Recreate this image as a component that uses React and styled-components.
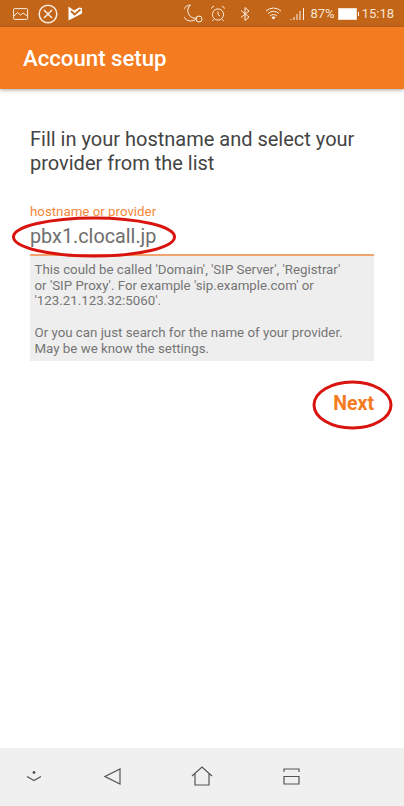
import React from 'react';
import styled, { createGlobalStyle } from 'styled-components';

const GlobalStyle = createGlobalStyle`
  html, body {
    margin: 0;
    padding: 0;
    background: #fff;
  }
  body {
    font-family: Roboto, "Liberation Sans", sans-serif;
  }
`;

export default function App() {
    return (
        <Screen>
            <GlobalStyle />
            <StatusBar>
                <StatusGroup>
                    <Glyph width="16" height="14" $left={13} viewBox="0 0 16 14">
                        <rect x="0.6" y="1.6" width="14" height="10.8" rx="1" />
                        <path d="M1 9l3.5-3.5 3 2.5 2.5-2 4.5 3" />
                    </Glyph>
                    <Glyph width="20" height="20" $left={9} viewBox="0 0 20 20" $thick>
                        <circle cx="10" cy="10" r="8.8" />
                        <path d="M6 6l8 8M14 6l-8 8" />
                    </Glyph>
                    <Glyph width="15" height="15" $left={10} viewBox="0 0 15 15">
                        <path className="fill" d="M0.5 0.5L6 4.5l5-3 3 .5v5.500L0.5 14.500z" />
                        <path className="cut" d="M3 5l3.500 3.500 6-5" />
                    </Glyph>
                </StatusGroup>
                <StatusGroup>
                    <Glyph width="19" height="19" $left={0} viewBox="0 0 19 19">
                        <path d="M6.5 1a8 8 0 1 0 6.5 13 7.5 7.5 0 0 1-6.5-13z" />
                        <circle cx="15" cy="15" r="3" />
                    </Glyph>
                    <Glyph width="16" height="17" $left={7} viewBox="0 0 16 17">
                        <circle cx="8" cy="9.5" r="5.6" />
                        <path d="M8 6.5v3l2 1.5M1 3.5l3-2.5M15 3.5l-3-2.5M3.5 14.5L2.5 16M12.5 14.5l1 1.5" />
                    </Glyph>
                    <Glyph width="11" height="16" $left={14} viewBox="0 0 11 16">
                        <path d="M1 4.5l8 6.5-4 3.5V1.5l4 3.5-8 6.5" />
                    </Glyph>
                    <Glyph width="17" height="16" $left={14} viewBox="0 0 17 16">
                        <path d="M1 5a11 11 0 0 1 15 0M3 7.5a8 8 0 0 1 11 0M5 10a5 5 0 0 1 7 0" />
                        <path className="fill" d="M6.5 11.5a3 3 0 0 1 4 0L8.5 13.5z" />
                    </Glyph>
                    <Glyph width="16" height="14" $left={8} viewBox="0 0 16 14">
                        <path d="M1 13v-1M4 13v-3M7 13V7M10 13V4M13.5 13V1" />
                    </Glyph>
                    <StatusText $left={4}>87%</StatusText>
                    <Battery />
                    <StatusText $left={5}>15:18</StatusText>
                </StatusGroup>
            </StatusBar>
            <AppBar>Account setup</AppBar>
            <Content>
                <Heading>Fill in your hostname and select your provider from the list</Heading>
                <FieldLabel>hostname or provider</FieldLabel>
                <FieldValue>pbx1.clocall.jp</FieldValue>
                <Hint>
                    <p>This could be called 'Domain', 'SIP Server', 'Registrar' or 'SIP Proxy'. For example 'sip.example.com' or '123.21.123.32:5060'.</p>
                    <p>Or you can just search for the name of your provider. May be we know the settings.</p>
                </Hint>
                <Actions>
                    <NextButton>Next</NextButton>
                </Actions>
            </Content>
            <NavBar>
                <NavIcon width="16" height="12" viewBox="0 0 16 12" $left={0}>
                    <circle className="fill" cx="8" cy="2.5" r="1.4" />
                    <path d="M1 6.5l7 4 7-4" />
                </NavIcon>
                <NavIcon width="17" height="17" viewBox="0 0 17 17" $left={62}>
                    <path d="M16 1v15L1 8.5z" />
                </NavIcon>
                <NavIcon width="22" height="20" viewBox="0 0 22 20" $left={70}>
                    <path d="M1 10l10-9 10 9M4 8v11h14V8" />
                </NavIcon>
                <NavIcon width="17" height="17" viewBox="0 0 17 17" $left={70}>
                    <path d="M1 4V1h15v3M1 8.5h15V16H1z" />
                </NavIcon>
            </NavBar>
            <Annotation width="404" height="806" viewBox="0 0 404 806">
                <ellipse cx="94" cy="237" rx="80.5" ry="19" />
                <ellipse cx="352.5" cy="405" rx="38.5" ry="23" />
            </Annotation>
        </Screen>
    );
}

const Screen = styled.div`
  position: relative;
  width: 404px;
  height: 806px;
  overflow: hidden;
  display: flex;
  flex-direction: column;
  background: #fff;
`;

const StatusBar = styled.div`
  height: 27px;
  flex: none;
  display: flex;
  align-items: center;
  justify-content: space-between;
  padding-right: 10px;
  background: #c26518;
  color: #fbeee2;
`;

const StatusGroup = styled.div`
  display: flex;
  align-items: center;
`;

const Glyph = styled.svg`
  flex: none;
  margin-left: ${({ $left }) => $left}px;
  fill: none;
  stroke: #fbeee2;
  stroke-width: ${({ $thick }) => ($thick ? 1.5 : 1)};
  .fill {
    fill: #fff;
    stroke: none;
  }
  .cut {
    stroke: #c26518;
    stroke-width: 1.8;
  }
`;

const StatusText = styled.span`
  margin-left: ${({ $left }) => $left}px;
  font-size: 13px;
  color: #f8e4d2;
`;

const Battery = styled.div`
  position: relative;
  box-sizing: border-box;
  width: 19px;
  height: 12px;
  margin-left: 3px;
  background: #fff;
  border: 1px solid #f3dcc8;
  &::after {
    content: '';
    position: absolute;
    right: -3px;
    top: 3px;
    width: 1px;
    height: 4px;
    background: #fff;
  }
`;

const AppBar = styled.div`
  height: 62px;
  flex: none;
  box-sizing: border-box;
  padding-left: 23px;
  display: flex;
  align-items: center;
  font-size: 22.2px;
  font-weight: 500;
  color: #fff;
  background: #f47b20;
  box-shadow: 0 1px 4px rgba(0, 0, 0, 0.35);
  z-index: 1;
`;

const Content = styled.div`
  flex: 1;
  box-sizing: border-box;
  padding: 39px 30px 0;
`;

const Heading = styled.h1`
  margin: 0;
  font-size: 20px;
  font-weight: 400;
  line-height: 23.5px;
  color: #444;
`;

const FieldLabel = styled.div`
  margin-top: 29px;
  font-size: 13.3px;
  line-height: 15px;
  color: #f4873a;
`;

const FieldValue = styled.div`
  height: 37px;
  box-sizing: border-box;
  padding-top: 5px;
  font-size: 19.8px;
  line-height: 25px;
  color: #6e6e6e;
  border-bottom: 2px solid #f2a46e;
`;

const Hint = styled.div`
  box-sizing: border-box;
  height: 105px;
  padding: 6px 20px 0 4.5px;
  font-size: 13.3px;
  line-height: 15.7px;
  color: #757575;
  background: #eee;
  p {
    margin: 0 0 15.7px;
  }
`;

const Actions = styled.div`
  display: flex;
  justify-content: flex-end;
  margin-top: 32px;
`;

const NextButton = styled.button`
  padding: 0;
  border: 0;
  background: none;
  font-family: inherit;
  font-size: 19.5px;
  font-weight: 700;
  line-height: 22px;
  color: #f47b20;
`;

const NavBar = styled.div`
  height: 58px;
  flex: none;
  box-sizing: border-box;
  padding: 0 0 2px 26px;
  display: flex;
  align-items: center;
  background: #f0f0f0;
`;

const NavIcon = styled.svg`
  flex: none;
  margin-left: ${({ $left }) => $left}px;
  fill: none;
  stroke: #555;
  stroke-width: 1.2;
  .fill {
    fill: #555;
    stroke: none;
  }
`;

const Annotation = styled.svg`
  position: absolute;
  left: 0;
  top: 0;
  z-index: 2;
  pointer-events: none;
  fill: none;
  stroke: #d9140e;
  stroke-width: 3;
`;
